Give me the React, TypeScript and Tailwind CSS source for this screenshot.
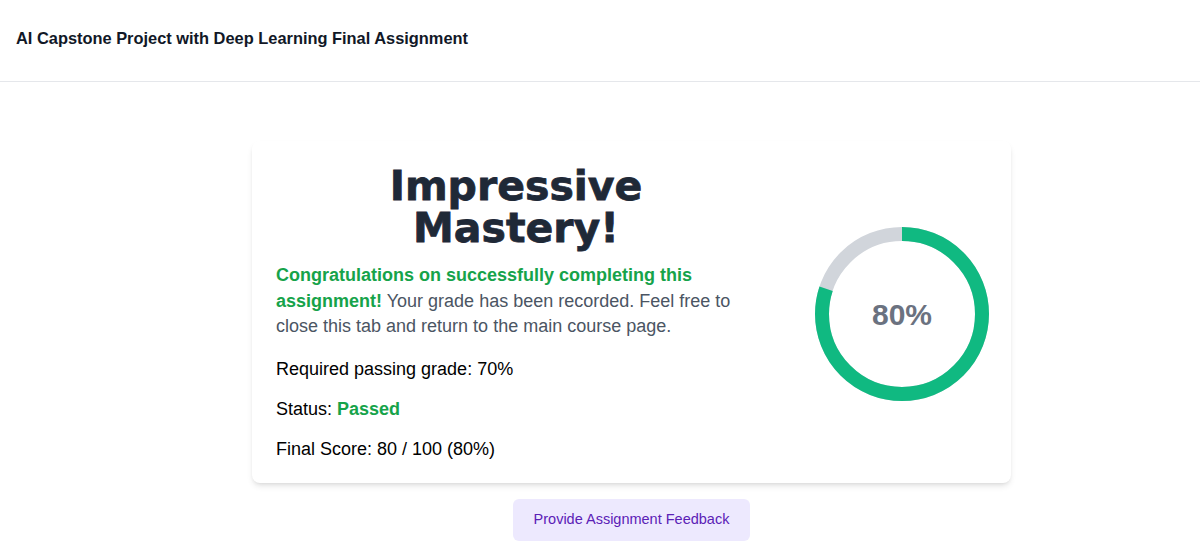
import React from "react";

const font = { fontFamily: '"Liberation Sans", Arial, sans-serif' };

function ScoreRing({ percent }: { percent: number }) {
  const r = 80;
  const c = 2 * Math.PI * r;
  return (
    <div className="relative w-[174px] h-[174px] shrink-0">
      <svg viewBox="0 0 174 174" className="w-full h-full -rotate-90">
        <circle cx="87" cy="87" r={r} fill="none" stroke="#d1d5db" strokeWidth="14" />
        <circle
          cx="87"
          cy="87"
          r={r}
          fill="none"
          stroke="#10b981"
          strokeWidth="14"
          strokeDasharray={`${(c * percent) / 100} ${c}`}
        />
      </svg>
      <div className="absolute inset-0 flex items-center justify-center pt-0.5 text-[30px] font-bold text-[#6b7280]">
        {percent}%
      </div>
    </div>
  );
}

export default function App() {
  return (
    <div className="min-h-[558px] bg-white text-[#111827]" style={font}>
      <header className="h-[82px] px-4 pt-[26px] border-b border-[#e5e7eb]">
        <h1 className="text-[16.4px] font-bold text-[#111827]">
          AI Capstone Project with Deep Learning Final Assignment
        </h1>
      </header>

      <main className="flex flex-col items-center pt-[59px] pl-[63px]">
        <div className="w-[759px] rounded-lg bg-white shadow-md pl-6 pr-[22px] pt-6 pb-5 flex items-center justify-between">
          <div className="w-[480px]">
            <h2
              className="text-center text-[41px] leading-[42px] font-bold text-[#1f2937] [-webkit-text-stroke:0.8px_#1f2937]"
              style={{ fontFamily: '"DejaVu Sans", sans-serif' }}
            >
              Impressive
              <br />
              Mastery!
            </h2>
            <p className="mt-[14px] text-lg leading-[25.5px] text-[#4b5563]">
              <span className="font-bold text-[#16a34a]">
                Congratulations on successfully completing this assignment!
              </span>{" "}
              Your grade has been recorded. Feel free to close this tab and return to the main course page.
            </p>
            <p className="mt-[15px] text-lg leading-7 text-black">Required passing grade: 70%</p>
            <p className="mt-3 text-lg leading-7 text-black">
              Status: <span className="font-bold text-[#16a34a]">Passed</span>
            </p>
            <p className="mt-3 text-lg leading-7 text-black">Final Score: 80 / 100 (80%)</p>
          </div>
          <ScoreRing percent={80} />
        </div>

        <button className="mt-4 h-[42px] px-[21px] rounded-md bg-[#ede9fe] text-[14.5px] text-[#5b21b6]">
          Provide Assignment Feedback
        </button>
      </main>
    </div>
  );
}
